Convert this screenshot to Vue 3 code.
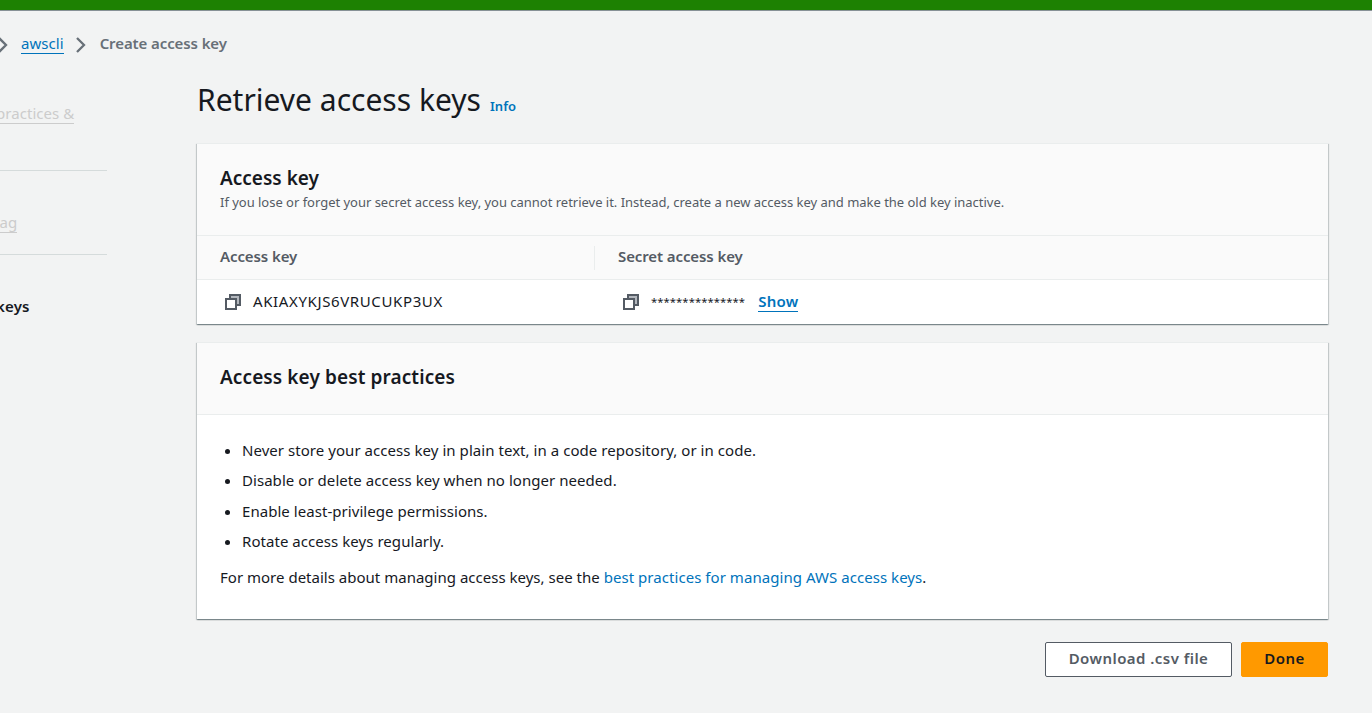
<script setup>
const practices = [
  'Never store your access key in plain text, in a code repository, or in code.',
  'Disable or delete access key when no longer needed.',
  'Enable least-privilege permissions.',
  'Rotate access keys regularly.',
]
</script>

<template>
  <div class="page">
    <div class="banner"></div>
    <nav class="crumbs">
      <svg class="chev" viewBox="0 0 10 16"><path d="M1 1l7 7-7 7" /></svg>
      <a class="crumb-link">awscli</a>
      <svg class="chev" viewBox="0 0 10 16"><path d="M1 1l7 7-7 7" /></svg>
      <span class="current">Create access key</span>
    </nav>
    <div class="layout">
      <aside class="steps">
        <div class="step first"><a>practices &amp;</a></div>
        <div class="step second"><a>tag</a></div>
        <div class="step active"><span>keys</span></div>
      </aside>
      <main class="content">
        <header class="title">
          <h1>Retrieve access keys</h1>
          <a class="info">Info</a>
        </header>
        <section class="card">
          <div class="card-head keys-head">
            <h2>Access key</h2>
            <p>If you lose or forget your secret access key, you cannot retrieve it. Instead, create a new access key and make the old key inactive.</p>
          </div>
          <div class="row labels">
            <div class="cell"><span>Access key</span></div>
            <div class="cell"><span>Secret access key</span></div>
          </div>
          <div class="row values">
            <div class="cell">
              <svg class="copy" viewBox="0 0 16 16"><path class="back" d="M5 1h10v10H5z" /><path class="front" d="M1 5h10v10H1z" /></svg>
              <span class="key">AKIAXYKJS6VRUCUKP3UX</span>
            </div>
            <div class="cell">
              <svg class="copy" viewBox="0 0 16 16"><path class="back" d="M5 1h10v10H5z" /><path class="front" d="M1 5h10v10H1z" /></svg>
              <span class="stars">***************</span>
              <a class="show">Show</a>
            </div>
          </div>
        </section>
        <section class="card tips">
          <div class="card-head tips-head"><h2>Access key best practices</h2></div>
          <div class="tips-body">
            <ul><li v-for="p in practices" :key="p">{{ p }}</li></ul>
            <p>For more details about managing access keys, see the <a>best practices for managing AWS access keys</a>.</p>
          </div>
        </section>
        <footer class="actions">
          <button class="btn">Download .csv file</button>
          <button class="btn primary">Done</button>
        </footer>
      </main>
    </div>
  </div>
</template>

<style>
body { background: #f2f3f3; }
</style>
<style scoped>
.page { height: 713px; overflow: hidden; background: #f2f3f3; color: #16191f; font: 15px/22px "Noto Sans", sans-serif; letter-spacing: 0.05px; }
.banner { height: 10px; background: #1d8102; border-bottom: 1px solid #879196; }
h1, h2, p, ul { margin: 0; padding: 0; }
.crumbs { display: flex; align-items: center; height: 65px; margin-left: -2px; }
.chev { width: 10px; height: 16px; fill: none; stroke: #687078; stroke-width: 2.3; margin-top: 2px; }
.crumb-link { color: #0073bb; border-bottom: 1px solid; margin: 0 12px 0 13px; line-height: 20px; }
.current { font-weight: 600; color: #687078; margin: -1px 0 0 14px; letter-spacing: -0.1px; }
.layout { display: flex; }
.steps { width: 107px; margin-right: 90px; padding-top: 27px; }
.step { display: flex; align-items: flex-start; border-bottom: 1px solid #d5dbdb; }
.step a { color: #ccc; border-bottom: 1px solid; line-height: 20px; }
.first { height: 67px; margin-left: -4px; }
.second { height: 84px; margin-left: -6px; padding-top: 41px; box-sizing: border-box; }
.active { font-weight: 600; border: 0; padding-top: 40px; margin-left: -4px; letter-spacing: 0.2px; }
.content { width: 1131px; }
.title { display: flex; align-items: baseline; gap: 9px; height: 67px; }
h1 { font-size: 30px; font-weight: 400; line-height: 48px; letter-spacing: 0; }
.info { font-size: 13px; font-weight: 600; color: #0073bb; }
.card { background: #fff; border-top: 1px solid #eaeded; box-shadow: 0 1px 1px 0 rgba(0, 28, 36, .3), 1px 1px 1px 0 rgba(0, 28, 36, .15), -1px 1px 1px 0 rgba(0, 28, 36, .15); }
.card + .card { margin-top: 18px; }
.card-head { box-sizing: border-box; background: #fafafa; padding: 20px 23px; border-bottom: 1px solid #eaeded; }
.keys-head { height: 92px; }
.tips-head { height: 72px; }
h2 { font-size: 19px; font-weight: 600; line-height: 28px; letter-spacing: 0; }
.tips-head h2 { letter-spacing: 0.1px; }
.card-head p { font-size: 13px; color: #545b64; line-height: 20px; letter-spacing: -0.02px; }
.row { display: grid; grid-template-columns: 398px 1fr; align-items: center; height: 44px; }
.cell { display: flex; align-items: center; padding-left: 23px; }
.labels { font-weight: 600; color: #545b64; background: #fafafa; border-bottom: 1px solid #eaeded; height: 43px; letter-spacing: -0.1px; }
.labels span { margin-top: -4px; }
.labels .cell:first-child { height: 24px; border-right: 1px solid #eaeded; }
.values .cell { padding-left: 28px; }
.copy { width: 16px; height: 16px; stroke: #545b64; stroke-width: 2; margin-right: 12px; }
.back { fill: #b4b8be; }
.front { fill: #fff; }
.key { letter-spacing: 0.62px; margin-top: -2px; }
.stars { font-size: 11.3px; margin-top: -1px; }
.show { font-weight: 600; color: #0073bb; margin: -2px 0 0 13px; border-bottom: 1px solid; line-height: 20px; letter-spacing: 0.25px; }
.tips-body { box-sizing: border-box; height: 204px; padding: 24px 23px 0; }
.tips-body p { letter-spacing: 0.01px; }
ul { display: grid; gap: 8.3px; padding-left: 22px; margin-bottom: 14px; }
.tips-body a { color: #0073bb; letter-spacing: 0.05px; }
.actions { display: flex; justify-content: flex-end; gap: 9px; margin-top: 23px; }
.btn { box-sizing: border-box; width: 187px; height: 35px; padding: 0 0 3px; border: 1px solid #545b64; border-radius: 2px; background: #fff; color: #545b64; font: 600 15px/22px "Noto Sans", sans-serif; letter-spacing: 0.45px; }
.primary { width: 87px; background: #f90; border-color: #f90; color: #16191f; }
</style>
